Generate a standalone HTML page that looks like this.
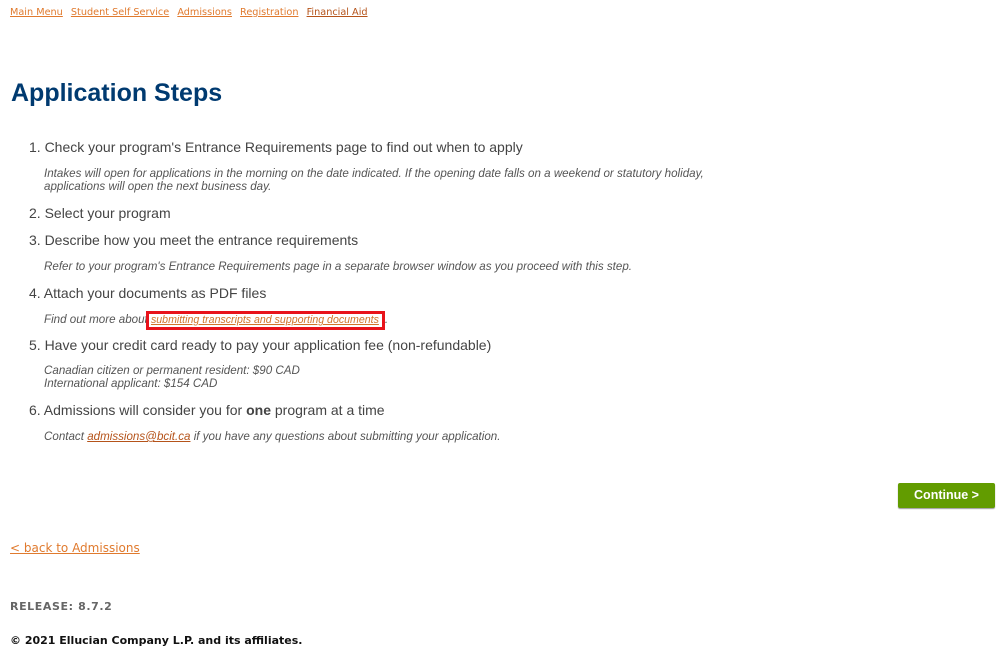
<!DOCTYPE html>
<html><head><meta charset="utf-8"><style>
body{margin:0;width:1005px;height:650px;background:#fff;position:relative;overflow:hidden;font-family:"Liberation Sans",Arial,sans-serif;}
.a{position:absolute;white-space:nowrap;}
.nav{top:7px;left:10px;font-family:"DejaVu Sans",Verdana,sans-serif;font-size:9.7px;}
.nav a{color:#e07a2e;text-decoration:underline;margin-right:5px;}
h1{position:absolute;left:11px;top:79px;margin:0;font-family:"Liberation Sans",Arial,sans-serif;font-size:25px;font-weight:bold;color:#003a70;}
.li{left:29px;font-size:14px;color:#444;}
.sub{left:44px;font-size:11.6px;font-style:italic;color:#555;line-height:13px;}
.sub a{color:#d0742a;}
.btn{left:898px;top:483px;width:97px;height:25px;background:#629c00;border-radius:2px;box-shadow:0 1px 1px #999;color:#fff;font-weight:bold;font-size:12.5px;text-align:center;line-height:25px;}
.back{left:10px;top:541px;font-family:"DejaVu Sans",Verdana,sans-serif;font-size:12px;color:#e07a2e;text-decoration:underline;}
.f{left:10px;font-family:"DejaVu Sans",Verdana,sans-serif;font-size:11px;font-weight:bold;}
.box{border:3px solid #e8131b;padding:0 3px 1px 2px;margin-left:-5px;font-size:10.6px;}
</style></head><body>
<div class="a nav"><a>Main Menu</a> <a>Student Self Service</a> <a>Admissions</a> <a>Registration</a> <a style="color:#b5531a">Financial Aid</a></div>
<h1>Application Steps</h1>
<div class="a li" style="top:139px">1. Check your program's Entrance Requirements page to find out when to apply</div>
<div class="a sub" style="top:167px">Intakes will open for applications in the morning on the date indicated. If the opening date falls on a weekend or statutory holiday,<br>applications will open the next business day.</div>
<div class="a li" style="top:205px">2. Select your program</div>
<div class="a li" style="top:232px">3. Describe how you meet the entrance requirements</div>
<div class="a sub" style="top:260px">Refer to your program's Entrance Requirements page in a separate browser window as you proceed with this step.</div>
<div class="a li" style="top:285px">4. Attach your documents as PDF files</div>
<div class="a sub" style="top:313px">Find out more about <span class="box"><a style="text-decoration:underline">submitting transcripts and supporting documents</a></span>.</div>
<div class="a li" style="top:337px">5. Have your credit card ready to pay your application fee (non-refundable)</div>
<div class="a sub" style="top:364px">Canadian citizen or permanent resident: $90 CAD<br>International applicant: $154 CAD</div>
<div class="a li" style="top:402px">6. Admissions will consider you for <b>one</b> program at a time</div>
<div class="a sub" style="top:430px">Contact <a style="text-decoration:underline;color:#b5531a">admissions@bcit.ca</a> if you have any questions about submitting your application.</div>
<div class="a btn">Continue &gt;</div>
<div class="a back">&lt; back to Admissions</div>
<div class="a f" style="top:600px;color:#666;letter-spacing:0.6px">RELEASE: 8.7.2</div>
<div class="a f" style="top:634px;color:#111">© 2021 Ellucian Company L.P. and its affiliates.</div>
</body></html>
